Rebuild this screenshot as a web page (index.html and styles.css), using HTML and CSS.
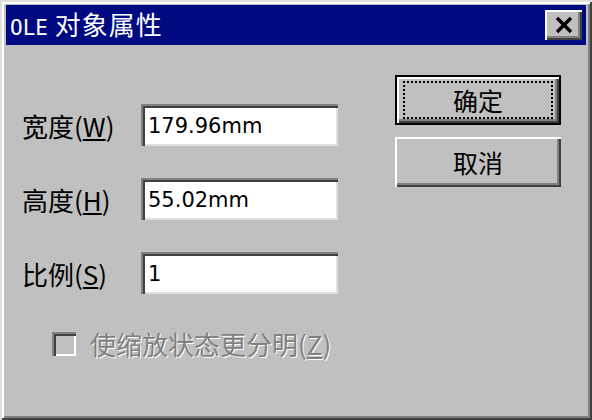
FILE: index.html
```html
<!DOCTYPE html>
<html lang="zh-CN">

<head>
  <meta charset="UTF-8">
  <title>OLE 对象属性</title>
  <link rel="stylesheet" href="styles.css">
</head>

<body>
  <div class="window">
    <div class="titlebar">
      <span class="title"><span class="latin">OLE</span> 对象属性</span>
      <button class="close">
        <svg width="20" height="18" viewBox="0 0 20 18">
          <path d="M3 2 L17 16 M17 2 L3 16" stroke="#000" stroke-width="3.5" fill="none" />
        </svg>
      </button>
    </div>

    <div class="content">
      <div class="form">
        <div class="row">
          <label class="label">宽度(<u>W</u>)</label>
          <div class="field">179.96mm</div>
        </div>
        <div class="row">
          <label class="label">高度(<u>H</u>)</label>
          <div class="field">55.02mm</div>
        </div>
        <div class="row">
          <label class="label">比例(<u>S</u>)</label>
          <div class="field">1</div>
        </div>
        <div class="check">
          <span class="box"></span>
          <span class="check-text">使缩放状态更分明(<u>Z</u>)</span>
        </div>
      </div>

      <div class="buttons">
        <button class="btn default"><span class="focus">确定</span></button>
        <button class="btn">取消</button>
      </div>
    </div>
  </div>
</body>

</html>
```

FILE: styles.css
```css
body {
  margin: 0;
  background-color: #c0c0c0;
  font-family: "Noto Sans CJK SC", sans-serif;
}

.window {
  width: 592px;
  height: 420px;
  box-sizing: border-box;
  padding: 5px 6px;
  background-color: #c0c0c0;
  box-shadow: inset 2px 2px #dfdfdf, inset -2px -2px #404040,
    inset 4px 4px #ffffff, inset -4px -4px #808080;
}

.titlebar {
  height: 40px;
  background-color: #000a80;
  display: flex;
  align-items: center;
  justify-content: space-between;
  padding: 0 4px 0 4px;
}

.title {
  color: white;
  font-size: 26px;
  line-height: 1;
  letter-spacing: 1px;
}

.title .latin {
  font-family: "DejaVu Sans Mono", monospace;
  font-size: 21px;
  letter-spacing: 0;
}

.close {
  width: 37px;
  height: 30px;
  padding: 0;
  border: none;
  background-color: #c0c0c0;
  display: flex;
  align-items: center;
  justify-content: center;
  box-shadow: inset 2px 2px #ffffff, inset -2px -2px #404040, inset -4px -4px #808080;
}

.content {
  display: flex;
  justify-content: space-between;
}

.form {
  padding: 59px 0 0 16px;
}

.row {
  display: flex;
  align-items: center;
  height: 42px;
  margin-bottom: 32px;
}

.label {
  width: 119px;
  font-size: 26px;
  color: #000;
}

.field {
  width: 197px;
  height: 42px;
  box-sizing: border-box;
  padding: 4px 0 0 7px;
  background-color: white;
  font-family: "DejaVu Sans", sans-serif;
  font-size: 21px;
  line-height: 36px;
  color: #000;
  box-shadow: inset 2px 2px #808080, inset 4px 4px #404040,
    inset -2px -2px #dfdfdf;
}

.check {
  display: flex;
  align-items: center;
  margin: -1px 0 0 30px;
}

.box {
  width: 24px;
  height: 24px;
  box-sizing: border-box;
  background-color: #c0c0c0;
  box-shadow: inset 2px 2px #808080, inset 4px 4px #404040,
    inset -2px -2px #ffffff;
  margin-right: 14px;
}

.check-text {
  font-size: 26px;
  color: #808080;
  text-shadow: 1px 1px #ffffff;
}

.buttons {
  display: flex;
  flex-direction: column;
  gap: 12px;
  padding-top: 30px;
  margin-right: 25px;
}

.btn {
  width: 166px;
  height: 50px;
  border: none;
  padding: 0;
  background-color: #c0c0c0;
  font-family: "Noto Sans CJK SC", sans-serif;
  font-size: 25px;
  color: #000;
  box-shadow: inset 2px 2px #ffffff, inset -2px -2px #404040, inset -4px -4px #808080;
}

.btn.default {
  box-shadow: inset 0 0 0 2px #000000, inset 4px 4px #ffffff,
    inset -4px -4px #404040, inset -6px -6px #808080;
}

.btn .focus {
  display: block;
  margin: 0 8px;
  height: 34px;
  line-height: 34px;
  border: 2px dotted #000;
}
```
